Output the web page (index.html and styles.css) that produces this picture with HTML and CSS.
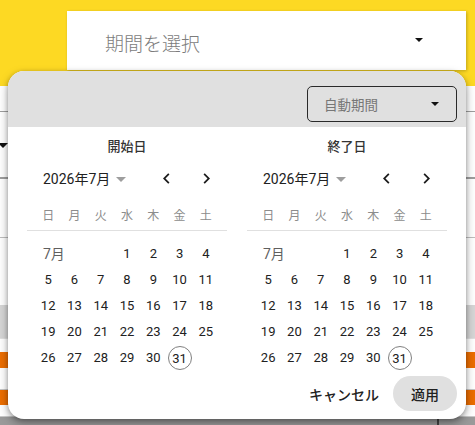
FILE: index.html
```html
<!DOCTYPE html>
<html lang="ja">
<head>
<meta charset="utf-8">
<title>期間を選択</title>
<link rel="stylesheet" href="styles.css">
</head>
<body>
<div class="topbar">
  <div class="field">
    <span class="field-label">期間を選択</span>
    <span class="tri"></span>
  </div>
</div>

<div class="backdrop">
  <div class="bg-a"></div>
  <div class="bg-b"><span class="bg-arrow"></span></div>
  <div class="bg-c"></div>
  <div class="bg-d"></div>
  <div class="bg-band"></div>
  <div class="bg-gap"></div>
  <div class="bg-orange"></div>
  <div class="bg-gap2"></div>
  <div class="bg-orange2"></div>
  <div class="bg-gap3"></div>
  <div class="bg-f"><span class="bg-vline"></span></div>
</div>

<div class="dialog">
  <div class="dlg-head">
    <div class="period-select">
      <span>自動期間</span>
      <span class="tri"></span>
    </div>
  </div>

  <div class="cals">
    <div class="cal">
      <div class="cal-title">開始日</div>
      <div class="month-bar">
        <span class="month-label">2026年7月</span>
        <span class="caret"></span>
        <div class="nav">
          <span class="nav-btn"><svg width="21" height="21" viewBox="0 0 24 24"><path d="M15.41 7.41L14 6l-6 6 6 6 1.41-1.41L10.83 12z"/></svg></span>
          <span class="nav-btn"><svg width="21" height="21" viewBox="0 0 24 24"><path d="M8.59 16.59L10 18l6-6-6-6-1.41 1.41L13.17 12z"/></svg></span>
        </div>
      </div>
      <div class="grid weekdays">
        <span>日</span><span>月</span><span>火</span><span>水</span><span>木</span><span>金</span><span>土</span>
      </div>
      <div class="divider"></div>
      <div class="grid days">
        <span class="mlabel">7月</span>
        <span>1</span><span>2</span><span>3</span><span>4</span>
        <span>5</span><span>6</span><span>7</span><span>8</span><span>9</span><span>10</span><span>11</span>
        <span>12</span><span>13</span><span>14</span><span>15</span><span>16</span><span>17</span><span>18</span>
        <span>19</span><span>20</span><span>21</span><span>22</span><span>23</span><span>24</span><span>25</span>
        <span>26</span><span>27</span><span>28</span><span>29</span><span>30</span><span><i class="today">31</i></span>
      </div>
    </div>

    <div class="cal">
      <div class="cal-title">終了日</div>
      <div class="month-bar">
        <span class="month-label">2026年7月</span>
        <span class="caret"></span>
        <div class="nav">
          <span class="nav-btn"><svg width="21" height="21" viewBox="0 0 24 24"><path d="M15.41 7.41L14 6l-6 6 6 6 1.41-1.41L10.83 12z"/></svg></span>
          <span class="nav-btn"><svg width="21" height="21" viewBox="0 0 24 24"><path d="M8.59 16.59L10 18l6-6-6-6-1.41 1.41L13.17 12z"/></svg></span>
        </div>
      </div>
      <div class="grid weekdays">
        <span>日</span><span>月</span><span>火</span><span>水</span><span>木</span><span>金</span><span>土</span>
      </div>
      <div class="divider"></div>
      <div class="grid days">
        <span class="mlabel">7月</span>
        <span>1</span><span>2</span><span>3</span><span>4</span>
        <span>5</span><span>6</span><span>7</span><span>8</span><span>9</span><span>10</span><span>11</span>
        <span>12</span><span>13</span><span>14</span><span>15</span><span>16</span><span>17</span><span>18</span>
        <span>19</span><span>20</span><span>21</span><span>22</span><span>23</span><span>24</span><span>25</span>
        <span>26</span><span>27</span><span>28</span><span>29</span><span>30</span><span><i class="today">31</i></span>
      </div>
    </div>
  </div>

  <div class="footer">
    <span class="btn-cancel">キャンセル</span>
    <span class="btn-apply">適用</span>
  </div>
</div>
</body>
</html>
```
FILE: styles.css
```css
* { box-sizing: border-box; }
html, body { margin: 0; }
body {
  width: 475px;
  height: 425px;
  overflow: hidden;
  position: relative;
  background: #fafafa;
  font-family: Roboto, "Noto Sans CJK JP", sans-serif;
  color: #212121;
}

.tri {
  width: 0;
  height: 0;
  border-left: 4px solid transparent;
  border-right: 4px solid transparent;
  border-top: 4px solid #111;
}

/* top bar */
.topbar {
  height: 86px;
  background: #fdd923;
  padding: 11px 9px 0 67px;
}
.field {
  height: 59px;
  background: #fff;
  display: flex;
  align-items: center;
  justify-content: space-between;
  padding: 0 43px 0 38px;
  box-shadow: 1px 1px 3px rgba(0,0,0,.25);
}
.field-label {
  font-size: 19px;
  font-weight: 300;
  color: #7c7c7c;
  padding-top: 4px;
}
.field .tri { margin-bottom: 1px; }

/* backdrop */
.backdrop { background: #fff; }
.bg-a { height: 26px; border-bottom: 1px solid #9e9e9e; }
.bg-b { height: 67px; border-bottom: 2px solid #9e9e9e; padding-top: 31px; }
.bg-arrow {
  display: block;
  width: 0; height: 0;
  border-left: 5px solid transparent;
  border-right: 5px solid transparent;
  border-top: 5px solid #111;
  margin-left: -2px;
}
.bg-c { height: 59px; border-bottom: 1px solid #bdbdbd; }
.bg-d { height: 67px; }
.bg-band { height: 33px; background: #d6d6d6; }
.bg-gap { height: 14px; border-top: 1px solid #e0e0e0; }
.bg-orange { height: 16px; background: #ec6e00; }
.bg-gap2 { height: 22px; border-top: 10px solid #fff; border-bottom: 1px solid #c8c8c8; }
.bg-orange2 { height: 15px; background: #ec6e00; }
.bg-gap3 { height: 12px; border-bottom: 1px solid #c8c8c8; }
.bg-f { height: 10px; background: #9a9a9a; }
.bg-vline { display: block; margin-left: 437px; width: 2px; height: 100%; background: #444; }

/* dialog */
.dialog {
  position: absolute;
  left: 8px;
  top: 71px;
  width: 458px;
  height: 348px;
  background: #fff;
  border-radius: 16px;
  overflow: hidden;
  box-shadow: 0 4px 10px rgba(0,0,0,.35), 0 1px 4px rgba(0,0,0,.2);
}
.dlg-head {
  height: 56px;
  background: #e0e0e0;
  display: flex;
  justify-content: flex-end;
  align-items: flex-end;
  padding: 0 9px 5px 0;
}
.period-select {
  width: 150px;
  height: 36px;
  border: 1px solid #2a2a2a;
  border-radius: 5px;
  display: flex;
  align-items: center;
  justify-content: space-between;
  padding: 0 17px 0 16px;
  font-size: 13.5px;
  color: #777;
}

.cals {
  display: flex;
  gap: 20px;
  padding: 0 19px;
}
.cal { width: 200px; }
.cal-title {
  padding-top: 12px;
  height: 28px;
  line-height: 16px;
  text-align: center;
  font-size: 13px;
  font-weight: 500;
  color: #333;
}
.month-bar {
  margin-top: 8px;
  height: 30px;
  display: flex;
  align-items: center;
  padding-left: 16px;
}
.month-label { font-size: 14px; color: #212121; }
.caret {
  margin-left: 6px;
  margin-top: 2px;
  width: 0; height: 0;
  border-left: 5px solid transparent;
  border-right: 5px solid transparent;
  border-top: 5px solid #9e9e9e;
}
.nav { margin-left: auto; margin-right: 1px; display: flex; }
.nav-btn {
  width: 40px;
  height: 30px;
  display: flex;
  align-items: center;
  justify-content: center;
}
.nav-btn svg { fill: #1a1a1a; }

.grid {
  width: 184px;
  margin: 0 auto;
  display: grid;
  grid-template-columns: repeat(7, 1fr);
  text-align: center;
}
.weekdays {
  margin-top: 11px;
  height: 24px;
  line-height: 24px;
  font-size: 12px;
  color: #8c8c8c;
}
.divider {
  margin-top: 2px;
  height: 1px;
  background: #e0e0e0;
}
.days {
  margin-top: 10px;
  grid-auto-rows: 26px;
  line-height: 26px;
  font-size: 13px;
  color: #212121;
}
.days span { display: flex; align-items: center; justify-content: center; }
.days .mlabel {
  grid-column: 1 / 4;
  justify-content: flex-start;
  padding-left: 8px;
  font-size: 14px;
  color: #5f5f5f;
}
.today {
  font-style: normal;
  width: 24px;
  height: 24px;
  border: 1px solid #808080;
  border-radius: 50%;
  display: flex;
  align-items: center;
  justify-content: center;
  line-height: 1;
}

.footer {
  margin-top: 5px;
  display: flex;
  justify-content: flex-end;
  align-items: center;
  gap: 14px;
  padding-right: 9px;
}
.btn-cancel {
  font-size: 14px;
  font-weight: 500;
  color: #212121;
}
.btn-apply {
  width: 64px;
  height: 35px;
  border-radius: 18px;
  background: #e0e0e0;
  display: flex;
  align-items: center;
  justify-content: center;
  font-size: 14px;
  font-weight: 500;
  color: #212121;
}
```
